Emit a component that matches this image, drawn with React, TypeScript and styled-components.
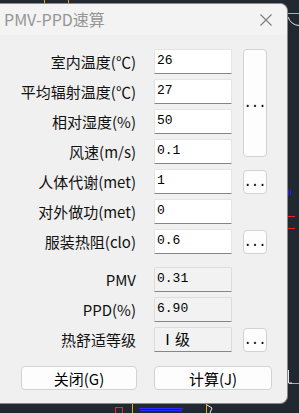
import React, { FC } from "react";
import styled, { createGlobalStyle } from "styled-components";

const GlobalStyle = createGlobalStyle`
  html, body {
    margin: 0;
    padding: 0;
    background: #212830;
  }
  body {
    width: 299px;
    height: 413px;
    overflow: hidden;
    position: relative;
  }
`;

const CJK = `"Noto Sans CJK SC", "Noto Sans", sans-serif`;
const MONO = `"Liberation Mono", "Noto Sans CJK SC", monospace`;

type Row = { label: string; value: string; more?: "tall" | "small" };

const inputs: Row[] = [
  { label: "室内温度(℃)", value: "26", more: "tall" },
  { label: "平均辐射温度(℃)", value: "27" },
  { label: "相对湿度(%)", value: "50" },
  { label: "风速(m/s)", value: "0.1" },
  { label: "人体代谢(met)", value: "1", more: "small" },
  { label: "对外做功(met)", value: "0" },
  { label: "服装热阻(clo)", value: "0.6", more: "small" },
];

const results: Row[] = [
  { label: "PMV", value: "0.31" },
  { label: "PPD(%)", value: "6.90" },
  { label: "热舒适等级", value: "Ⅰ级", more: "small" },
];

// bits of the CAD drawing that peek out around the dialog
const CanvasBits: FC = () => (
  <Canvas width="299" height="413" viewBox="0 0 299 413">
    <g stroke="#e4ac1c" strokeWidth="1">
      <line x1="44.5" y1="0" x2="44.5" y2="3" />
      <line x1="68.5" y1="0" x2="68.5" y2="3" />
      <line x1="288" y1="13.5" x2="299" y2="13.5" />
      <line x1="289" y1="383.5" x2="299" y2="383.5" />
      <line x1="132.5" y1="403" x2="132.5" y2="413" />
      <line x1="206.5" y1="403" x2="206.5" y2="413" />
      <line x1="0" y1="398.5" x2="3" y2="398.5" />
    </g>
    <g stroke="#e8e8e8" strokeWidth="1" fill="none">
      <path d="M288 17 Q291 25 299 25.5" />
      <path d="M288.5 370 V383 H292" />
      <path d="M207 405 L212 408 L210 413" />
    </g>
    <g fill="none" strokeWidth="1">
      <path d="M288.5 189 V196 M290.5 190 V195" stroke="#2020ff" />
      <path d="M288 216.5 H295 M288 228.5 H295" stroke="#ff1a1a" />
      <rect x="115.5" y="407.5" width="7" height="6" stroke="#ff2020" />
      <path d="M139 408.5 H183 M140 410.5 H182" stroke="#2a2aff" />
    </g>
  </Canvas>
);

const CloseIcon: FC = () => (
  <svg width="12" height="12" viewBox="0 0 12 12">
    <path d="M0.5 0.5 L11.5 11.5 M11.5 0.5 L0.5 11.5" stroke="#7d7d7d" strokeWidth="1.1" />
  </svg>
);

const FieldRow: FC<{ row: Row; readOnly?: boolean; index: number }> = ({ row, readOnly, index }) => (
  <>
    <Label style={{ gridRow: index + 1 }}>{row.label}</Label>
    <Field style={{ gridRow: index + 1 }} $readOnly={readOnly} defaultValue={row.value} readOnly={readOnly} $cjk={row.value === "Ⅰ级"} />
    {row.more && (
      <MoreBtn style={{ gridRow: row.more === "tall" ? `${index + 1} / span 4` : index + 1 }} $tall={row.more === "tall"}>
        ...
      </MoreBtn>
    )}
  </>
);

const App: FC = () => (
  <>
    <GlobalStyle />
    <CanvasBits />
    <Dialog>
      <TitleBar>
        <Title>PMV-PPD速算</Title>
        <CloseIcon />
      </TitleBar>
      <Body>
        <FormGrid>
          {inputs.map((r, i) => (
            <FieldRow key={r.label} row={r} index={i} />
          ))}
        </FormGrid>
        <ResultGrid>
          {results.map((r, i) => (
            <FieldRow key={r.label} row={r} index={i} readOnly />
          ))}
        </ResultGrid>
        <Footer>
          <ActionBtn $w={116}>关闭(G)</ActionBtn>
          <ActionBtn $w={118}>计算(J)</ActionBtn>
        </Footer>
      </Body>
    </Dialog>
  </>
);

const Canvas = styled.svg`
  position: absolute;
  left: 0;
  top: 0;
  z-index: 0;
`;

const Dialog = styled.div`
  position: relative;
  z-index: 1;
  margin-top: 3px;
  width: 288px;
  height: 401px;
  box-sizing: border-box;
  border: 1px solid #8a8a8a;
  border-left: none;
  border-radius: 0 8px 8px 0;
  background: #f0f0f0;
  overflow: hidden;
`;

const TitleBar = styled.div`
  height: 31px;
  display: flex;
  align-items: center;
  justify-content: space-between;
  padding: 0 15px 0 4px;
  background: #f3f3f3;
`;

const Title = styled.span`
  font-family: ${CJK};
  font-size: 16px;
  color: #959595;
  padding-bottom: 1px;
`;

const Body = styled.div`
  padding-top: 14px;
`;

const FormGrid = styled.div`
  display: grid;
  grid-template-columns: 154px 78px 35px;
  grid-auto-rows: 25px;
  row-gap: 5px;
`;

const ResultGrid = styled(FormGrid)`
  margin-top: 13px;
`;

const Label = styled.div`
  grid-column: 1;
  display: flex;
  align-items: center;
  justify-content: flex-end;
  padding-right: 18px;
  font-family: ${CJK};
  font-size: 15px;
  color: #111;
  white-space: nowrap;
`;

const Field = styled.input<{ $readOnly?: boolean; $cjk?: boolean }>`
  grid-column: 2;
  width: 78px;
  height: 25px;
  box-sizing: border-box;
  margin: 0;
  padding: 0 2px 3px;
  border: 1px solid ${(p) => (p.$readOnly ? "#dcdcdc" : "#e4e4e4")};
  border-bottom: 1px solid #868686;
  border-radius: 2px 2px 0 0;
  background: ${(p) => (p.$readOnly ? "#f2f2f2" : "#fff")};
  font-family: ${(p) => (p.$cjk ? CJK : MONO)};
  font-size: ${(p) => (p.$cjk ? "15px" : "13px")};
  color: #000;
  outline: none;
  text-indent: ${(p) => (p.$cjk ? "3px" : "0")};
`;

const MoreBtn = styled.button<{ $tall?: boolean }>`
  grid-column: 3;
  justify-self: end;
  align-self: ${(p) => (p.$tall ? "start" : "center")};
  width: 24px;
  height: ${(p) => (p.$tall ? "108px" : "24px")};
  padding: 0;
  margin: 0;
  border: 1px solid #d2d2d2;
  border-radius: 4px;
  background: #fdfdfd;
  font-family: ${MONO};
  font-size: 14px;
  letter-spacing: -1px;
  text-indent: -1px;
  color: #000;
`;

const Footer = styled.div`
  display: flex;
  gap: 17px;
  padding-left: 21px;
  margin-top: 14px;
`;

const ActionBtn = styled.button<{ $w: number }>`
  width: ${(p) => p.$w}px;
  height: 24px;
  padding: 0;
  margin: 0;
  border: 1px solid #d2d2d2;
  border-radius: 4px;
  background: #fdfdfd;
  font-family: ${CJK};
  font-size: 15px;
  color: #000;
`;

export default App;
